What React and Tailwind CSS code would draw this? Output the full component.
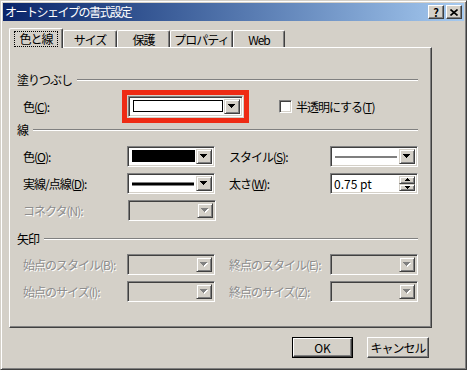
import React from "react";

const raisedBtn =
  "border border-t-white border-l-white border-r-[#404040] border-b-[#404040] shadow-[inset_-1px_-1px_#808080]";
const raisedBox =
  "border border-t-[#d4d0c8] border-l-[#d4d0c8] border-r-[#404040] border-b-[#404040] shadow-[inset_1px_1px_#ffffff,inset_-1px_-1px_#808080]";
const sunken =
  "border border-t-[#808080] border-l-[#808080] border-r-white border-b-white shadow-[inset_1px_1px_#404040,inset_-1px_-1px_#d4d0c8]";
const dim = "text-[#8e8e8e] [text-shadow:1px_1px_0_#ffffff]";

const Arrow = ({ disabled }) => (
  <svg width="8" height="5" viewBox="0 0 8 5" shapeRendering="crispEdges">
    {disabled && (
      <g fill="#ffffff" transform="translate(1 1)">
        <rect x="0" y="0" width="7" height="1" />
        <rect x="1" y="1" width="5" height="1" />
        <rect x="2" y="2" width="3" height="1" />
        <rect x="3" y="3" width="1" height="1" />
      </g>
    )}
    <g fill={disabled ? "#808080" : "#000000"}>
      <rect x="0" y="0" width="7" height="1" />
      <rect x="1" y="1" width="5" height="1" />
      <rect x="2" y="2" width="3" height="1" />
      <rect x="3" y="3" width="1" height="1" />
    </g>
  </svg>
);

const Combo = ({ width, disabled, children, className = "" }) => (
  <div
    className={`${sunken} ${disabled ? "bg-[#d4d0c8]" : "bg-white"} h-[21px] p-[2px] flex shrink-0 ${className}`}
    style={{ width }}
  >
    <div className="flex-1 relative">{children}</div>
    <div className={`${raisedBox} bg-[#d4d0c8] w-[16px] h-full flex items-center justify-center`}>
      <Arrow disabled={disabled} />
    </div>
  </div>
);

const Swatch = ({ color }) => (
  <div className="absolute left-[2px] right-[1px] top-[1px] bottom-[2px] border border-black" style={{ background: color }} />
);

const Line = ({ thick }) => (
  <div className={`absolute left-[2px] right-[2px] top-1/2 -translate-y-1/2 bg-black ${thick ? "h-[3px]" : "h-px"}`} />
);

const Group = ({ title }) => (
  <div className="flex items-center h-[14px]">
    <span className="whitespace-nowrap">{title}</span>
    <div className="flex-1 ml-[5px] border-t border-t-[#808080] border-b border-b-white" />
  </div>
);

const Tab = ({ label, width, active }) => (
  <div
    className={`flex items-center justify-center bg-[#d4d0c8] border-t border-l border-white border-r border-r-[#404040] shadow-[inset_-1px_0_#808080] rounded-t-[2px] ${
      active ? "h-[20px] -mb-px relative z-10" : "h-[17px]"
    }`}
    style={{ width }}
  >
    {active ? (
      <span className="border border-dotted border-black px-[4px] leading-[13px] pb-px">{label}</span>
    ) : (
      <span className="leading-[13px]">{label}</span>
    )}
  </div>
);

const Row = ({ children, className = "" }) => (
  <div className={`flex items-center h-[21px] pl-[6px] whitespace-nowrap ${className}`}>{children}</div>
);

const U = ({ children }) => <span className="underline underline-offset-1">{children}</span>;

export default function App() {
  return (
    <div className="w-[467px] h-[370px] bg-[#d4d0c8] border border-t-[#d4d0c8] border-l-[#d4d0c8] border-r-[#404040] border-b-[#404040] shadow-[inset_1px_1px_#ffffff,inset_-1px_-1px_#808080] p-[2px] text-[12px] leading-[14px] tracking-[-1px] text-black font-['Noto_Sans_CJK_JP',sans-serif] overflow-hidden">
      {/* title bar */}
      <div className="h-[18px] bg-linear-to-r from-[#0a246a] to-[#a6caf0] flex items-center pl-[2px] pr-[2px]">
        <span className="text-white text-[12px] tracking-[-1.5px] flex-1">オートシェイプの書式設定</span>
        <div className={`${raisedBtn} bg-[#d4d0c8] w-[16px] h-[14px] flex items-center justify-center text-[11px] font-bold leading-none tracking-normal`}>
          ?
        </div>
        <div className={`${raisedBtn} bg-[#d4d0c8] w-[16px] h-[14px] ml-[2px] flex items-center justify-center`}>
          <svg width="8" height="7" viewBox="0 0 8 7">
            <path d="M0.5 0.5l7 6M7.5 0.5l-7 6" stroke="#000" strokeWidth="1.6" />
          </svg>
        </div>
      </div>

      <div className="px-[6px]">
        {/* tabs */}
        <div className="flex items-end h-[19px] mt-[7px]">
          <Tab label="色と線" width={54} active />
          <Tab label="サイズ" width={54} />
          <Tab label="保護" width={53} />
          <Tab label="プロパティ" width={63} />
          <Tab label="Web" width={52} />
        </div>

        {/* panel */}
        <div className="w-[423px] h-[281px] border border-t-white border-l-white border-r-[#404040] border-b-[#404040] shadow-[inset_-1px_-1px_#808080] pl-[7px] pr-[13px] pt-[25px]">
          <Group title="塗りつぶし" />
          <Row className="mt-[9px]">
            <div className="w-[105px]">
              色(<U>C</U>):
            </div>
            <Combo width={115} className="outline-[5px] outline-solid outline-[#ee2b14] outline-offset-1">
              <Swatch color="#ffffff" />
            </Combo>
            <div className={`${sunken} bg-white w-[13px] h-[13px] ml-[36px] shrink-0`} />
            <span className="ml-[4px]">
              半透明にする(<U>T</U>)
            </span>
          </Row>

          <div className="mt-[6px]">
            <Group title="線" />
          </div>
          <Row className="mt-[9px]">
            <div className="w-[105px]">
              色(<U>O</U>):
            </div>
            <Combo width={88}>
              <Swatch color="#000000" />
            </Combo>
            <div className="w-[102px] ml-[14px]">
              スタイル(<U>S</U>):
            </div>
            <Combo width={88}>
              <Line />
            </Combo>
          </Row>
          <Row className="mt-[6px]">
            <div className="w-[105px]">
              実線/点線(<U>D</U>):
            </div>
            <Combo width={88}>
              <Line thick />
            </Combo>
            <div className="w-[102px] ml-[14px]">
              太さ(<U>W</U>):
            </div>
            <div className={`${sunken} bg-white w-[88px] h-[21px] p-[2px] flex shrink-0`}>
              <div className="flex-1 flex items-center pl-[1px] tracking-normal">0.75 pt</div>
              <div className="w-[16px] h-full flex flex-col">
                <div className={`${raisedBox} bg-[#d4d0c8] flex-1 flex items-center justify-center`}>
                  <svg width="5" height="3" viewBox="0 0 5 3" shapeRendering="crispEdges">
                    <rect x="2" y="0" width="1" height="1" />
                    <rect x="1" y="1" width="3" height="1" />
                    <rect x="0" y="2" width="5" height="1" />
                  </svg>
                </div>
                <div className={`${raisedBox} bg-[#d4d0c8] flex-1 flex items-center justify-center`}>
                  <svg width="5" height="3" viewBox="0 0 5 3" shapeRendering="crispEdges">
                    <rect x="0" y="0" width="5" height="1" />
                    <rect x="1" y="1" width="3" height="1" />
                    <rect x="2" y="2" width="1" height="1" />
                  </svg>
                </div>
              </div>
            </div>
          </Row>
          <Row className="mt-[6px]">
            <div className={`w-[105px] ${dim}`}>コネクタ(N):</div>
            <Combo width={88} disabled />
          </Row>

          <div className="mt-[11px]">
            <Group title="矢印" />
          </div>
          <Row className="mt-[8px]">
            <div className={`w-[105px] ${dim}`}>始点のスタイル(B):</div>
            <Combo width={88} disabled />
            <div className={`w-[102px] ml-[14px] ${dim}`}>終点のスタイル(E):</div>
            <Combo width={88} disabled />
          </Row>
          <Row className="mt-[6px]">
            <div className={`w-[105px] ${dim}`}>始点のサイズ(I):</div>
            <Combo width={88} disabled />
            <div className={`w-[102px] ml-[14px] ${dim}`}>終点のサイズ(Z):</div>
            <Combo width={88} disabled />
          </Row>
        </div>

        {/* buttons */}
        <div className="w-[423px] flex justify-end pr-[3px] mt-[9px]">
          <div className="border border-black">
            <div className={`${raisedBtn} bg-[#d4d0c8] w-[59px] h-[19px] flex items-center justify-center tracking-normal`}>OK</div>
          </div>
          <div className={`${raisedBtn} bg-[#d4d0c8] w-[62px] h-[21px] ml-[14px] flex items-center justify-center`}>
            キャンセル
          </div>
        </div>
      </div>
    </div>
  );
}
